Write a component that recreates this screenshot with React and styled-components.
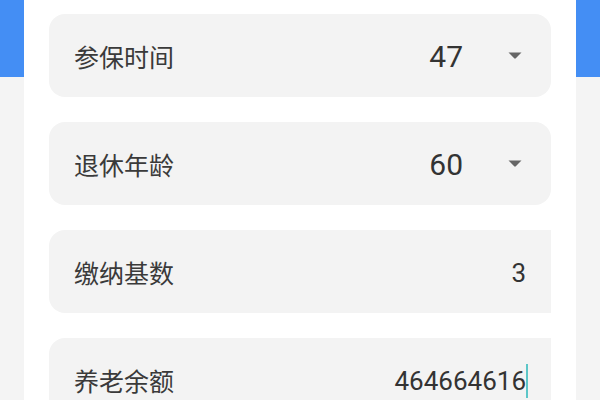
import React from "react";
import styled, { createGlobalStyle } from "styled-components";

const Global = createGlobalStyle`
  html, body { margin: 0; padding: 0; }
  body {
    width: 600px;
    height: 400px;
    overflow: hidden;
    background: #ffffff;
    font-family: "Noto Sans CJK SC", "Noto Sans", sans-serif;
  }
`;

const Screen = styled.div`
  display: flex;
  width: 600px;
  height: 400px;
  overflow: hidden;
`;

const Rail = styled.div`
  width: 24px;
  flex: none;
  display: flex;
  flex-direction: column;
  background: #f4f4f4;
`;

const RailAccent = styled.div`
  height: 77px;
  background: #448ef4;
`;

const Panel = styled.div`
  flex: 1;
  background: #ffffff;
  padding: 14px 25px 0 25px;
  display: flex;
  flex-direction: column;
  gap: 25px;
`;

const Card = styled.div`
  flex: none;
  height: 83px;
  background: #f3f3f3;
  border-radius: ${(p) => (p.$clipped ? "16px 0 0 16px" : "16px")};
  display: flex;
  align-items: center;
  padding: 0 ${(p) => (p.$select ? "29px" : "25px")} 0 25px;
  box-sizing: border-box;
`;

const Label = styled.span`
  font-family: "Noto Sans CJK SC", sans-serif;
  font-size: 25px;
  color: #3a3a3a;
  flex: 1;
  line-height: 1;
  padding-top: 2px;
`;

const SelectValue = styled.span`
  font-family: Roboto, "Noto Sans", sans-serif;
  font-size: 30px;
  color: #333333;
  line-height: 1;
  margin-right: 45px;
  padding-top: 3px;
`;

const InputValue = styled.span`
  font-family: Roboto, "Noto Sans", sans-serif;
  font-size: 26px;
  color: #333333;
  line-height: 1;
  display: flex;
  align-items: center;
  padding-top: 2px;
`;

const Cursor = styled.span`
  display: inline-block;
  width: 2px;
  height: 34px;
  margin-left: 0px;
  margin-right: -2px;
  background: #5cc6c8;
`;

const Caret = () => (
  <svg width="14" height="7" viewBox="0 0 14 7">
    <path d="M0.5 0.5 H13.5 L7.8 6.3 Q7 7 6.2 6.3 Z" fill="#666666" />
  </svg>
);

export default function App() {
  return (
    <>
      <Global />
      <Screen>
        <Rail>
          <RailAccent />
        </Rail>
        <Panel>
          <Card $select>
            <Label>参保时间</Label>
            <SelectValue>47</SelectValue>
            <Caret />
          </Card>
          <Card $select>
            <Label>退休年龄</Label>
            <SelectValue>60</SelectValue>
            <Caret />
          </Card>
          <Card $clipped>
            <Label>缴纳基数</Label>
            <InputValue>3</InputValue>
          </Card>
          <Card $clipped>
            <Label>养老余额</Label>
            <InputValue>
              464664616
              <Cursor />
            </InputValue>
          </Card>
        </Panel>
        <Rail>
          <RailAccent />
        </Rail>
      </Screen>
    </>
  );
}
